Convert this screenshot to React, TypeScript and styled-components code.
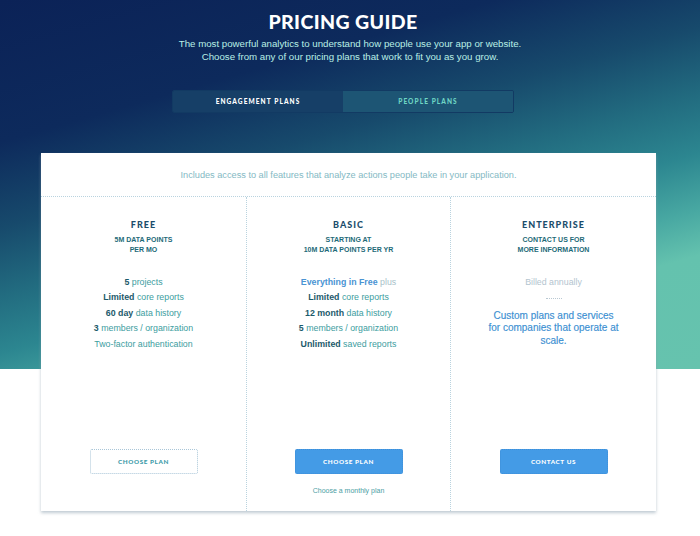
import React from "react";
import styled, { createGlobalStyle } from "styled-components";

const GlobalStyle = createGlobalStyle`
  html, body { margin: 0; padding: 0; background: #ffffff; }
  body { font-family: "Liberation Sans", Arial, sans-serif; }
  * { box-sizing: border-box; }
`;

const Page = styled.div`
  width: 700px;
  height: 536px;
  overflow: hidden;
  background:
    linear-gradient(164deg, #0b2257 0%, #0d2a5c 25%, #174a6c 40%, #226c80 52%, #2c8690 62%, #48a8a2 72%, #64c2ae 80%, #66c3ae 100%) top left / 100% 369px no-repeat,
    #ffffff;
  display: flex;
  flex-direction: column;
  align-items: center;
  padding-top: 10px;
`;

const Title = styled.h1`
  margin: 0 14px 0 0;
  font-family: Lato, "Open Sans", sans-serif;
  font-weight: 900;
  font-size: 19.5px;
  line-height: 24px;
  letter-spacing: 0.4px;
  color: #ffffff;
`;

const Subtitle = styled.p`
  margin: 3px 0 0;
  font-size: 9.7px;
  line-height: 13px;
  color: #b9efe6;
  text-align: center;
`;

const Tabs = styled.div`
  margin: 27px 14px 0 0;
  width: 342px;
  height: 23px;
  display: grid;
  grid-template-columns: 170px 1fr;
  border: 1px solid #123a63;
  border-radius: 2px;
  overflow: hidden;
`;

const Tab = styled.div<{ $active?: boolean }>`
  display: flex;
  align-items: center;
  justify-content: center;
  font-family: Lato, "Open Sans", sans-serif;
  font-weight: 900;
  font-size: 6.5px;
  letter-spacing: 1.1px;
  color: ${(p) => (p.$active ? "#ffffff" : "#6fd6c4")};
  background: ${(p) => (p.$active ? "#163f67" : "#1d5574")};
`;

const Card = styled.div`
  margin-top: 40px;
  align-self: flex-start;
  margin-left: 41px;
  width: 615px;
  height: 358px;
  background: #ffffff;
  box-shadow: 0 2px 3px rgba(140, 160, 175, 0.55);
  display: flex;
  flex-direction: column;
`;

const CardHeader = styled.div`
  height: 44px;
  display: flex;
  align-items: center;
  justify-content: center;
  font-size: 9.2px;
  color: #84b9c4;
  border-bottom: 1px dotted #b9d3df;
`;

const Columns = styled.div`
  flex: 1;
  display: grid;
  grid-template-columns: 205px 204px 1fr;
`;

const Column = styled.div<{ $divider?: boolean }>`
  display: flex;
  flex-direction: column;
  align-items: center;
  padding-top: 22px;
  border-left: ${(p) => (p.$divider ? "1px dotted #b9d3df" : "none")};
`;

const PlanName = styled.div`
  font-family: Lato, "Open Sans", sans-serif;
  font-weight: 900;
  font-size: 9px;
  line-height: 11px;
  letter-spacing: 1px;
  color: #1b4d6b;
`;

const PlanSub = styled.div`
  margin-top: 5px;
  font-weight: 700;
  font-size: 7px;
  line-height: 10px;
  text-align: center;
  color: #1d6a78;
`;

const Features = styled.ul`
  list-style: none;
  margin: 20px 0 0;
  padding: 0;
  display: flex;
  flex-direction: column;
  align-items: center;
`;

const Feature = styled.li`
  font-size: 8.8px;
  line-height: 15.4px;
  color: #3c9da0;
  text-align: center;
`;

const Strong = styled.b<{ $blue?: boolean }>`
  font-weight: 700;
  color: ${(p) => (p.$blue ? "#4a94d3" : "#1c5a6b")};
`;

const Muted = styled.span`
  color: #a9bfc9;
`;

const Billed = styled.div`
  margin-top: 20px;
  font-size: 8.8px;
  line-height: 15px;
  color: #b3c4cf;
`;

const ShortRule = styled.div`
  margin-top: 8px;
  width: 16px;
  border-top: 1px dotted #b9c8d2;
`;

const Custom = styled.div`
  margin-top: 11px;
  font-size: 10px;
  line-height: 12.3px;
  text-align: center;
  color: #3b8fd2;
  -webkit-text-stroke: 0.15px #3b8fd2;
`;

const Footer = styled.div`
  margin-top: auto;
  height: 62px;
  display: flex;
  flex-direction: column;
  align-items: center;
`;

const Button = styled.div<{ $primary?: boolean }>`
  width: 108px;
  height: 25px;
  display: flex;
  align-items: center;
  justify-content: center;
  border-radius: 2px;
  font-family: Lato, "Open Sans", sans-serif;
  font-weight: 900;
  font-size: 6.3px;
  letter-spacing: 0.6px;
  color: ${(p) => (p.$primary ? "#ffffff" : "#3a9aa8")};
  background: ${(p) => (p.$primary ? "#449be6" : "#ffffff")};
  border: 1px dotted ${(p) => (p.$primary ? "#3f8fd8" : "#a9c6d8")};
`;

const Monthly = styled.div`
  margin-top: 13px;
  font-size: 7px;
  color: #4b9ea4;
`;

export default function App() {
  return (
    <>
      <GlobalStyle />
      <Page>
        <Title>PRICING GUIDE</Title>
        <Subtitle>
          The most powerful analytics to understand how people use your app or website.
          <br />
          Choose from any of our pricing plans that work to fit you as you grow.
        </Subtitle>
        <Tabs>
          <Tab $active>ENGAGEMENT PLANS</Tab>
          <Tab>PEOPLE PLANS</Tab>
        </Tabs>
        <Card>
          <CardHeader>Includes access to all features that analyze actions people take in your application.</CardHeader>
          <Columns>
            <Column>
              <PlanName>FREE</PlanName>
              <PlanSub>
                5M DATA POINTS
                <br />
                PER MO
              </PlanSub>
              <Features>
                <Feature><Strong>5</Strong> projects</Feature>
                <Feature><Strong>Limited</Strong> core reports</Feature>
                <Feature><Strong>60 day</Strong> data history</Feature>
                <Feature><Strong>3</Strong> members / organization</Feature>
                <Feature>Two-factor authentication</Feature>
              </Features>
              <Footer>
                <Button>CHOOSE PLAN</Button>
              </Footer>
            </Column>
            <Column $divider>
              <PlanName>BASIC</PlanName>
              <PlanSub>
                STARTING AT
                <br />
                10M DATA POINTS PER YR
              </PlanSub>
              <Features>
                <Feature><Strong $blue>Everything in Free</Strong> <Muted>plus</Muted></Feature>
                <Feature><Strong>Limited</Strong> core reports</Feature>
                <Feature><Strong>12 month</Strong> data history</Feature>
                <Feature><Strong>5</Strong> members / organization</Feature>
                <Feature><Strong>Unlimited</Strong> saved reports</Feature>
              </Features>
              <Footer>
                <Button $primary>CHOOSE PLAN</Button>
                <Monthly>Choose a monthly plan</Monthly>
              </Footer>
            </Column>
            <Column $divider>
              <PlanName>ENTERPRISE</PlanName>
              <PlanSub>
                CONTACT US FOR
                <br />
                MORE INFORMATION
              </PlanSub>
              <Billed>Billed annually</Billed>
              <ShortRule />
              <Custom>
                Custom plans and services
                <br />
                for companies that operate at
                <br />
                scale.
              </Custom>
              <Footer>
                <Button $primary>CONTACT US</Button>
              </Footer>
            </Column>
          </Columns>
        </Card>
      </Page>
    </>
  );
}
